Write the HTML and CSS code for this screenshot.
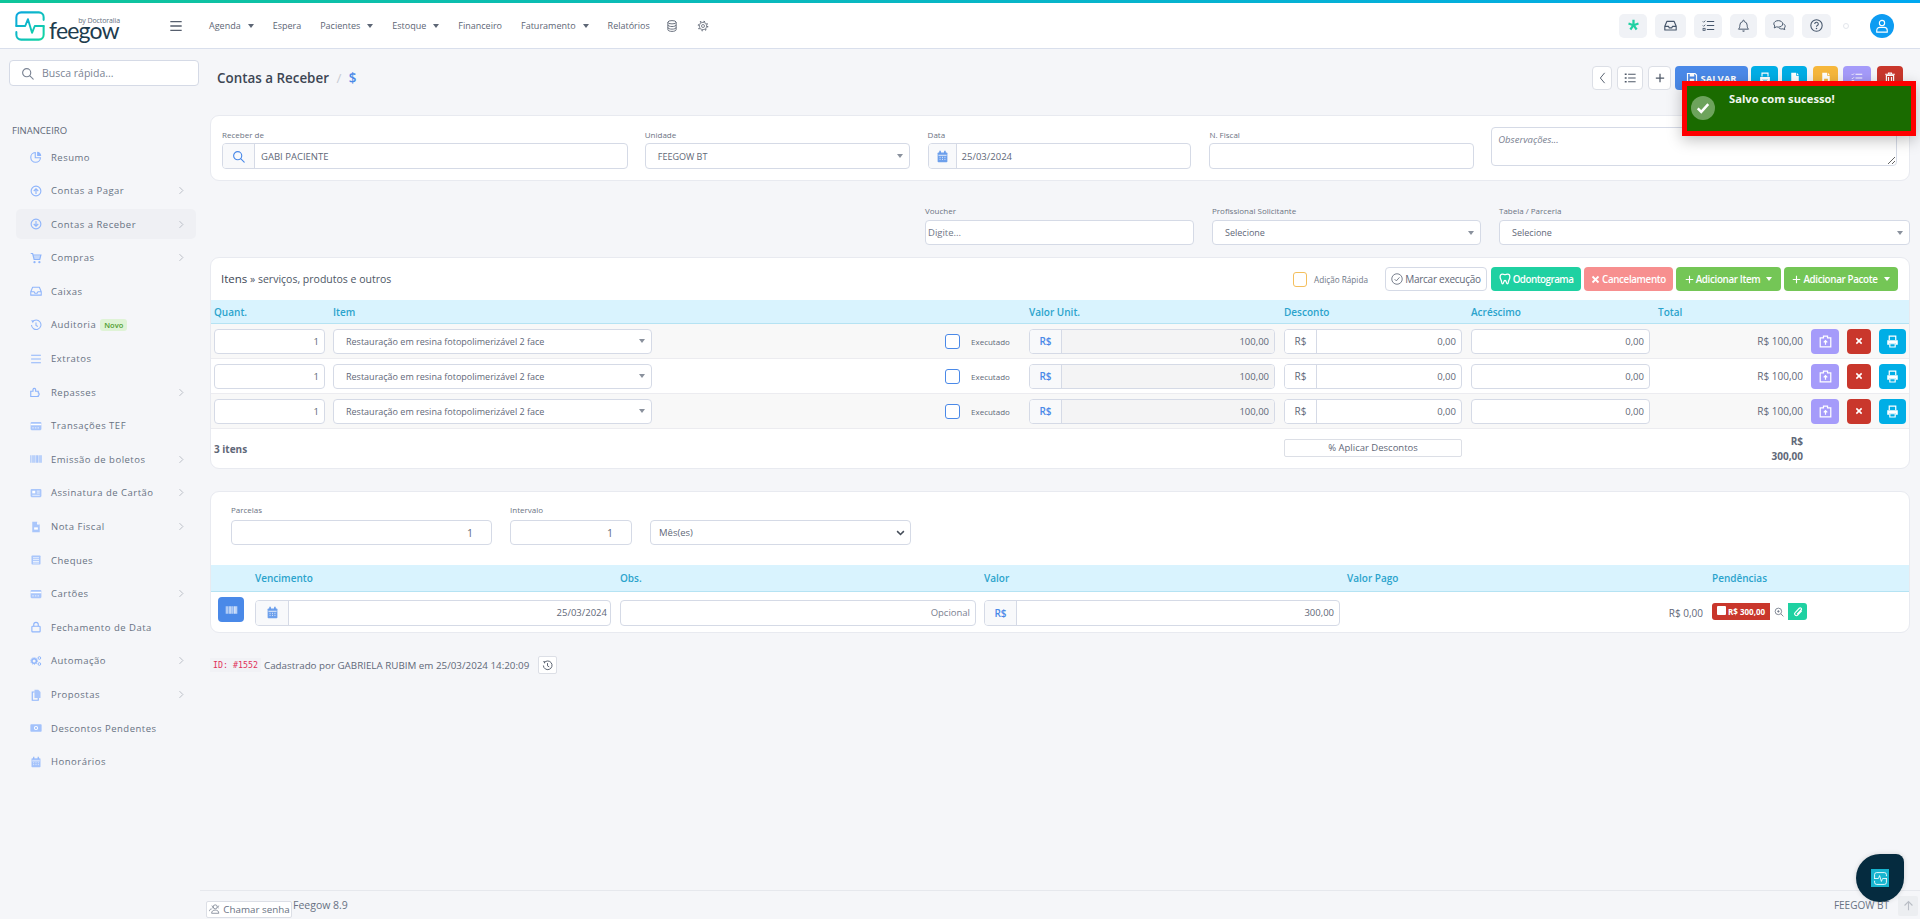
FILE: index.html
```html
<!DOCTYPE html>
<html lang="pt-BR">
<head>
<meta charset="utf-8">
<title>Contas a Receber - Feegow</title>
<link rel="stylesheet" href="styles.css">
</head>
<body>
<svg class="sprite" width="0" height="0" aria-hidden="true">
  <defs>
    <linearGradient id="lg" x1="0" y1="0" x2="1" y2="1"><stop offset="0" stop-color="#0aa6e0"/><stop offset="1" stop-color="#12d6a0"/></linearGradient>
    <symbol id="i-search" viewBox="0 0 16 16"><circle cx="7" cy="7" r="5" fill="none" stroke="currentColor" stroke-width="1.4"/><path d="M11 11l4 4" stroke="currentColor" stroke-width="1.4" stroke-linecap="round"/></symbol>
    <symbol id="i-pie" viewBox="0 0 16 16"><path d="M7 2a6.5 6.5 0 1 0 7 7H7z" fill="none" stroke="currentColor" stroke-width="1.5"/><path d="M9.500 1v5.500H15A6 6 0 0 0 9.500 1z" fill="currentColor"/></symbol>
    <symbol id="i-up" viewBox="0 0 16 16"><circle cx="8" cy="8" r="6.500" fill="none" stroke="currentColor" stroke-width="1.500"/><path d="M8 12V5M5 8l3-3 3 3" fill="none" stroke="currentColor" stroke-width="1.500"/></symbol>
    <symbol id="i-down" viewBox="0 0 16 16"><circle cx="8" cy="8" r="6.500" fill="none" stroke="currentColor" stroke-width="1.500"/><path d="M8 4v7M5 8l3 3 3-3" fill="none" stroke="currentColor" stroke-width="1.500"/></symbol>
    <symbol id="i-cart" viewBox="0 0 16 16"><path d="M1 2h2.500l2 8h7.500l1.500-6H4.200" fill="none" stroke="currentColor" stroke-width="1.600"/><path d="M4.500 4.500h10l-1.200 5H5.700z" fill="currentColor" opacity=".45"/><circle cx="6" cy="13.500" r="1.500" fill="currentColor"/><circle cx="12.500" cy="13.500" r="1.500" fill="currentColor"/></symbol>
    <symbol id="i-inbox" viewBox="0 0 16 16"><path d="M1 9l2.500-6h9L15 9v4.500H1z M1 9h4.500l1 2h3l1-2H15" fill="none" stroke="currentColor" stroke-width="1.400" stroke-linejoin="round"/></symbol>
    <symbol id="i-history" viewBox="0 0 16 16"><path d="M3.200 4A6.300 6.300 0 1 1 2 8" fill="none" stroke="currentColor" stroke-width="1.400"/><path d="M1.500 1.500L5 2 4 5.500z" fill="currentColor"/><path d="M8 4.500V8.500l2.500 1.500" fill="none" stroke="currentColor" stroke-width="1.400"/></symbol>
    <symbol id="i-lines" viewBox="0 0 16 16"><path d="M1.500 3h13M1.500 8h13M1.500 13h13" stroke="currentColor" stroke-width="1.500"/></symbol>
    <symbol id="i-puzzle" viewBox="0 0 16 16"><path d="M1 7h3V4.500a1.800 1.800 0 0 1 3.500 0V7H11v2.200a1.700 1.700 0 0 1 0 3.300V14H1z" fill="none" stroke="currentColor" stroke-width="1.500"/></symbol>
    <symbol id="i-card" viewBox="0 0 16 16"><rect x=".8" y="2.500" width="14.400" height="11" rx="1.500" fill="currentColor" opacity=".75"/><rect x=".8" y="5" width="14.400" height="2" fill="#fff"/><path d="M3 10.500h2M6.500 10.500h2M10 10.500h2" stroke="#fff"/></symbol>
    <symbol id="i-barcode" viewBox="0 0 16 16"><path d="M1 3v10M3 3v10M5 3v10M6.500 3v10M8.500 3v10M10 3v10M12 3v10M13.500 3v10M15 3v10" stroke="currentColor" stroke-width="1"/></symbol>
    <symbol id="i-idcard" viewBox="0 0 16 16"><rect x=".8" y="2.500" width="14.400" height="11" rx="1.500" fill="currentColor" opacity=".75"/><rect x="3" y="5" width="4" height="3.500" fill="#fff"/><path d="M9 5.500h4M9 8h4M3 11h10" stroke="#fff"/></symbol>
    <symbol id="i-file" viewBox="0 0 16 16"><path d="M3 1h6.500L13 4.500V15H3z" fill="currentColor" opacity=".75"/><path d="M9.500 1v3.500H13" fill="#fff"/><path d="M5.500 8.500h5v3h-5z" fill="#fff"/></symbol>
    <symbol id="i-list" viewBox="0 0 16 16"><rect x="2" y="2" width="12" height="12" rx="1" fill="currentColor" opacity=".75"/><path d="M4 5h8M4 7.500h8M4 10h8M4 12h8" stroke="#fff"/></symbol>
    <symbol id="i-lock" viewBox="0 0 16 16"><rect x="2.500" y="7" width="11" height="7.500" rx="1" fill="none" stroke="currentColor" stroke-width="1.500"/><path d="M5 7V4.800a3 3 0 0 1 6 0V7" fill="none" stroke="currentColor" stroke-width="1.500"/></symbol>
    <symbol id="i-cogs" viewBox="0 0 16 16"><circle cx="5.500" cy="8" r="3" fill="none" stroke="currentColor" stroke-width="2"/><circle cx="5.500" cy="8" r="4.600" fill="none" stroke="currentColor" stroke-width="1.100" stroke-dasharray="1.500 1.400"/><circle cx="12.500" cy="4" r="1.800" fill="none" stroke="currentColor" stroke-width="1.300"/><circle cx="12.500" cy="12" r="1.800" fill="none" stroke="currentColor" stroke-width="1.300"/></symbol>
    <symbol id="i-copy" viewBox="0 0 16 16"><path d="M6 1h5l3 3v8H6z" fill="currentColor" opacity=".75"/><path d="M6 4H3v11h8v-3" fill="none" stroke="currentColor" stroke-width="1.500"/></symbol>
    <symbol id="i-money" viewBox="0 0 16 16"><rect x=".5" y="3" width="15" height="10" rx="1" fill="currentColor" opacity=".8"/><circle cx="8" cy="8" r="2.800" fill="#fff"/><circle cx="8" cy="8" r="1.300" fill="currentColor"/></symbol>
    <symbol id="i-cal" viewBox="0 0 16 16"><rect x="2" y="3" width="12" height="12" rx="1" fill="currentColor" opacity=".8"/><path d="M5 1v3M11 1v3" stroke="currentColor" stroke-width="1.600"/><path d="M3 6.500h10" stroke="#fff"/><path d="M4.500 9h1M7.500 9h1M10.500 9h1M4.500 11.500h1M7.500 11.500h1M10.500 11.500h1" stroke="#fff" stroke-width="1.200"/></symbol>
    <symbol id="i-chev" viewBox="0 0 8 12"><path d="M2 1.500L6.500 6 2 10.500" fill="none" stroke="currentColor" stroke-width="1.200"/></symbol>
    <symbol id="i-db" viewBox="0 0 14 16"><ellipse cx="7" cy="3" rx="5.500" ry="2.200" fill="none" stroke="currentColor" stroke-width="1.200"/><path d="M1.500 3v10c0 1.200 2.500 2.200 5.500 2.200s5.500-1 5.500-2.200V3M1.500 6.500c0 1.200 2.500 2.200 5.500 2.200s5.500-1 5.500-2.200M1.500 10c0 1.200 2.500 2.200 5.500 2.200s5.500-1 5.500-2.200" fill="none" stroke="currentColor" stroke-width="1.200"/></symbol>
    <symbol id="i-gear" viewBox="0 0 16 16"><circle cx="8" cy="8" r="2" fill="none" stroke="currentColor" stroke-width="1"/><circle cx="8" cy="8" r="5" fill="none" stroke="currentColor" stroke-width="1"/><circle cx="8" cy="8" r="6.300" fill="none" stroke="currentColor" stroke-width="1.500" stroke-dasharray="1.800 3.150"/></symbol>
    <symbol id="i-star" viewBox="0 0 16 16"><path d="M6.600 1h2.800v4.700l4.300-1.500.9 2.700-4.400 1.400 2.800 3.800-2.300 1.700L8 9.900l-2.700 3.900L3 12.100l2.800-3.800L1.400 6.900l.9-2.700 4.300 1.500z" fill="currentColor"/></symbol>
    <symbol id="i-tasks" viewBox="0 0 16 16"><path d="M6 3h9M6 8h9M6 13h9" stroke="currentColor" stroke-width="1.300"/><path d="M1 3l1 1 2-2M1 8l1 1 2-2" fill="none" stroke="currentColor" stroke-width="1.100"/><rect x="1.300" y="11.500" width="2.500" height="2.500" fill="none" stroke="currentColor"/></symbol>
    <symbol id="i-bell" viewBox="0 0 16 16"><path d="M8 1.500a1 1 0 0 1 1 1v.700a4.500 4.500 0 0 1 3.500 4.400c0 3 .8 3.900 1.700 4.900H1.800c.9-1 1.700-1.900 1.700-4.900A4.500 4.500 0 0 1 7 3.200v-.700a1 1 0 0 1 1-1z" fill="none" stroke="currentColor" stroke-width="1.200" stroke-linejoin="round"/><path d="M6.500 14.200a1.500 1.500 0 0 0 3 0" fill="currentColor"/></symbol>
    <symbol id="i-chat" viewBox="0 0 16 16"><path d="M6.500 2C3.500 2 1 3.800 1 6c0 1 .5 1.900 1.300 2.600L1.500 11l2.800-1.300c.7.200 1.400.3 2.200.3 3 0 5.500-1.800 5.500-4S9.500 2 6.500 2z" fill="none" stroke="currentColor" stroke-width="1.200" stroke-linejoin="round"/><path d="M13 6c1.200.7 2 1.700 2 2.900 0 .9-.4 1.600-1.100 2.200l.6 2-2.300-1c-1.800.5-4-.1-5.200-1.300" fill="none" stroke="currentColor" stroke-width="1.200"/></symbol>
    <symbol id="i-help" viewBox="0 0 16 16"><circle cx="8" cy="8" r="7" fill="none" stroke="currentColor" stroke-width="1.300"/><path d="M5.800 6.200A2.200 2.200 0 1 1 9 8.100c-.7.400-1 .8-1 1.500" fill="none" stroke="currentColor" stroke-width="1.300"/><circle cx="8" cy="11.700" r=".9" fill="currentColor"/></symbol>
    <symbol id="i-user" viewBox="0 0 16 16"><circle cx="8" cy="4.500" r="3" fill="none" stroke="currentColor" stroke-width="1.300"/><path d="M2 15v-2a3.500 3.500 0 0 1 3.500-3.500h5A3.500 3.500 0 0 1 14 13v2z" fill="none" stroke="currentColor" stroke-width="1.300"/></symbol>
    <symbol id="i-bullets" viewBox="0 0 16 16"><path d="M5.500 3h10M5.500 8h10M5.500 13h10" stroke="currentColor" stroke-width="1.400"/><path d="M1 2h2.500v2H1zM1 7h2.500v2H1zM1 12h2.500v2H1z" fill="currentColor"/></symbol>
    <symbol id="i-plus" viewBox="0 0 12 12"><path d="M6 1v10M1 6h10" stroke="currentColor" stroke-width="1.500"/></symbol>
    <symbol id="i-back" viewBox="0 0 8 14"><path d="M6.500 1L1.500 7l5 6" fill="none" stroke="currentColor" stroke-width="1.100"/></symbol>
    <symbol id="i-save" viewBox="0 0 16 16"><path d="M2 2h10l2 2v10H2z" fill="none" stroke="currentColor" stroke-width="1.600"/><path d="M5 2.500h6v3.500H5zM5 9h6v4.500H5z" fill="currentColor"/></symbol>
    <symbol id="i-print" viewBox="0 0 16 16"><path d="M4 6V1.500h8V6" fill="none" stroke="currentColor" stroke-width="1.500"/><path d="M1.500 6.500h13V12H12v-2H4v2H1.500z" fill="currentColor"/><path d="M4.700 10.700h6.600v4H4.700z" fill="none" stroke="currentColor" stroke-width="1.400"/></symbol>
    <symbol id="i-doc" viewBox="0 0 16 16"><path d="M3 1h6.500v4H13v10H3z" fill="currentColor"/><path d="M10.500 1l2.500 3h-2.500z" fill="currentColor"/></symbol>
    <symbol id="i-docx" viewBox="0 0 16 16"><path d="M3 1h6.500v4H13v10H3z" fill="currentColor"/><path d="M10.500 1l2.500 3h-2.500z" fill="currentColor"/><path d="M5.500 9h5v3h-5z" fill="#f6b73c"/></symbol>
    <symbol id="i-trash" viewBox="0 0 16 16"><path d="M1.500 3h13M6 3V1.300h4V3" fill="none" stroke="currentColor" stroke-width="1.500"/><path d="M3.200 4.500v10.700h9.600V4.500zM6 6.500v7M10 6.500v7" fill="none" stroke="currentColor" stroke-width="1.600"/></symbol>
    <symbol id="i-check" viewBox="0 0 16 16"><path d="M2 8.500l4 4 8-9" fill="none" stroke="currentColor" stroke-width="2.800"/></symbol>
    <symbol id="i-checko" viewBox="0 0 16 16"><circle cx="8" cy="8" r="7" fill="none" stroke="currentColor" stroke-width="1.100"/><path d="M4.800 8.200l2.300 2.300 4.200-4.700" fill="none" stroke="currentColor" stroke-width="1.100"/></symbol>
    <symbol id="i-tooth" viewBox="0 0 16 16"><path d="M4.500 1.500c1.300 0 2.300.8 3.500.8s2.200-.8 3.500-.8c2 0 3 1.700 3 3.700 0 2.800-1.500 3.700-1.800 6-.2 1.500-.5 3.300-1.500 3.300-1.600 0-1-4.500-3.200-4.500S6.400 14.500 4.800 14.500c-1 0-1.300-1.800-1.500-3.300-.3-2.300-1.800-3.200-1.800-6 0-2 1-3.700 3-3.700z" fill="none" stroke="currentColor" stroke-width="1.700"/></symbol>
    <symbol id="i-x" viewBox="0 0 12 12"><path d="M2 2l8 8M10 2l-8 8" stroke="currentColor" stroke-width="2.400"/></symbol>
    <symbol id="i-camera" viewBox="0 0 16 16"><path d="M5.500 1.500h5v2h4v11h-13v-11h4z" fill="none" stroke="currentColor" stroke-width="1.500"/><path d="M8 12V7M5.800 9L8 6.800 10.200 9" fill="none" stroke="currentColor" stroke-width="1.500"/></symbol>
    <symbol id="i-zoomp" viewBox="0 0 16 16"><circle cx="7" cy="7" r="5.200" fill="none" stroke="currentColor" stroke-width="1.200"/><path d="M11 11l4 4M5 7h4M7 5v4" stroke="currentColor" stroke-width="1.200"/></symbol>
    <symbol id="i-clip" viewBox="0 0 16 16"><path d="M13.500 6.500l-6 6.500a2.800 2.800 0 0 1-4-4l6.500-7a2 2 0 0 1 3 2.800l-6 6.400" fill="none" stroke="currentColor" stroke-width="1.800" stroke-linecap="round"/></symbol>
    <symbol id="i-people" viewBox="0 0 18 14"><circle cx="10" cy="4" r="2.800" fill="none" stroke="currentColor"/><path d="M5 13c0-3 2-4.500 5-4.500s5 1.500 5 4.500zM5 2.500a2 2 0 0 1 1 3.500M2 10c0-2 1-3 3-3M15.500 2.500a2 2 0 0 0-1 3.500" fill="none" stroke="currentColor"/></symbol>
    <symbol id="i-arrow" viewBox="0 0 14 14"><path d="M7 13V2M2 7l5-5 5 5" fill="none" stroke="currentColor" stroke-width="1.400"/></symbol>
    <symbol id="i-chevdown" viewBox="0 0 12 8"><path d="M1.500 1.500L6 6l4.500-4.500" fill="none" stroke="currentColor" stroke-width="2"/></symbol>
    <symbol id="i-logo" viewBox="0 0 44 44"><path d="M2 22V9a7 7 0 0 1 7-7h26a7 7 0 0 1 7 7v4M42 22v13a7 7 0 0 1-7 7H9a7 7 0 0 1-7-7v-4" fill="none" stroke="url(#lg)" stroke-width="3" stroke-linecap="round"/><path d="M2 22h13l4-10 6 20 4-10h13" fill="none" stroke="url(#lg)" stroke-width="2.800" stroke-linejoin="round" stroke-linecap="round"/></symbol>
  </defs>
</svg>

<div class="stripe"></div>
<header class="topbar">
  <a class="brand">
    <svg class="brand-mark"><use href="#i-logo"/></svg>
    <span class="brand-text"><small>by Doctoralia</small><b>feegow</b></span>
  </a>
  <svg class="burger"><use href="#i-lines"/></svg>
  <nav class="mainnav">
    <a>Agenda <i class="caret"></i></a>
    <a>Espera</a>
    <a>Pacientes <i class="caret"></i></a>
    <a>Estoque <i class="caret"></i></a>
    <a>Financeiro</a>
    <a>Faturamento <i class="caret"></i></a>
    <a>Relatórios</a>
    <a class="nav-db"><svg class="nav-ico"><use href="#i-db"/></svg></a>
    <a><svg class="nav-ico"><use href="#i-gear"/></svg></a>
  </nav>
  <div class="tools">
    <a class="tool tool-star"><svg><use href="#i-star"/></svg></a>
    <a class="tool tool-w31"><svg><use href="#i-inbox"/></svg></a>
    <a class="tool"><svg><use href="#i-tasks"/></svg></a>
    <a class="tool tool-w27"><svg><use href="#i-bell"/></svg></a>
    <a class="tool tool-w29"><svg><use href="#i-chat"/></svg></a>
    <a class="tool tool-w29"><svg><use href="#i-help"/></svg></a>
    <span class="status-dot"></span>
    <a class="avatar"><svg><use href="#i-user"/></svg></a>
  </div>
</header>

<div class="shell">
  <aside class="sidebar">
    <div class="quick"><svg><use href="#i-search"/></svg><span>Busca rápida...</span></div>
    <div class="side-title">FINANCEIRO</div>
    <ul class="side-menu">
      <li><svg class="si"><use href="#i-pie"/></svg><span>Resumo</span></li>
      <li><svg class="si"><use href="#i-up"/></svg><span>Contas a Pagar</span><svg class="sc"><use href="#i-chev"/></svg></li>
      <li class="active"><svg class="si"><use href="#i-down"/></svg><span>Contas a Receber</span><svg class="sc"><use href="#i-chev"/></svg></li>
      <li><svg class="si"><use href="#i-cart"/></svg><span>Compras</span><svg class="sc"><use href="#i-chev"/></svg></li>
      <li><svg class="si"><use href="#i-inbox"/></svg><span>Caixas</span></li>
      <li><svg class="si"><use href="#i-history"/></svg><span>Auditoria</span><em class="novo">Novo</em></li>
      <li><svg class="si"><use href="#i-lines"/></svg><span>Extratos</span></li>
      <li><svg class="si"><use href="#i-puzzle"/></svg><span>Repasses</span><svg class="sc"><use href="#i-chev"/></svg></li>
      <li><svg class="si"><use href="#i-card"/></svg><span>Transações TEF</span></li>
      <li><svg class="si"><use href="#i-barcode"/></svg><span>Emissão de boletos</span><svg class="sc"><use href="#i-chev"/></svg></li>
      <li><svg class="si"><use href="#i-idcard"/></svg><span>Assinatura de Cartão</span><svg class="sc"><use href="#i-chev"/></svg></li>
      <li><svg class="si"><use href="#i-file"/></svg><span>Nota Fiscal</span><svg class="sc"><use href="#i-chev"/></svg></li>
      <li><svg class="si"><use href="#i-list"/></svg><span>Cheques</span></li>
      <li><svg class="si"><use href="#i-card"/></svg><span>Cartões</span><svg class="sc"><use href="#i-chev"/></svg></li>
      <li><svg class="si"><use href="#i-lock"/></svg><span>Fechamento de Data</span></li>
      <li><svg class="si"><use href="#i-cogs"/></svg><span>Automação</span><svg class="sc"><use href="#i-chev"/></svg></li>
      <li><svg class="si"><use href="#i-copy"/></svg><span>Propostas</span><svg class="sc"><use href="#i-chev"/></svg></li>
      <li><svg class="si"><use href="#i-money"/></svg><span>Descontos Pendentes</span></li>
      <li><svg class="si"><use href="#i-cal"/></svg><span>Honorários</span></li>
    </ul>
  </aside>

  <main class="main">
    <div class="content">
      <div class="pagehead">
        <h1>Contas a Receber <span class="crumb-sep">/</span> <span class="crumb-ico">$</span></h1>
        <div class="actions">
          <a class="act act-w act-back"><svg><use href="#i-back"/></svg></a>
          <a class="act act-w act-list"><svg><use href="#i-bullets"/></svg></a>
          <a class="act act-w act-plus"><svg><use href="#i-plus"/></svg></a>
          <a class="act act-save"><svg><use href="#i-save"/></svg>SALVAR</a>
          <a class="act act-blue act-27"><svg><use href="#i-print"/></svg></a>
          <a class="act act-blue act-25"><svg><use href="#i-doc"/></svg></a>
          <a class="act act-orange act-25"><svg><use href="#i-docx"/></svg></a>
          <a class="act act-purple act-28"><svg><use href="#i-tasks"/></svg></a>
          <a class="act act-red act-26"><svg><use href="#i-trash"/></svg></a>
        </div>
      </div>

      <section class="card card-top">
        <div class="fld f-receber"><label>Receber de</label>
          <div class="ctl group"><span class="addon addon-ico"><svg class="ico-blue"><use href="#i-search"/></svg></span><span class="val">GABI PACIENTE</span></div></div>
        <div class="fld f-unidade"><label>Unidade</label>
          <div class="ctl sel"><span class="val">FEEGOW BT</span><i class="caret"></i></div></div>
        <div class="fld f-data"><label>Data</label>
          <div class="ctl group"><span class="addon addon-ico addon-cal"><svg class="ico-blue"><use href="#i-cal"/></svg></span><span class="val">25/03/2024</span></div></div>
        <div class="fld f-nf"><label>N. Fiscal</label><div class="ctl"></div></div>
        <textarea class="obs" placeholder="Observações..."></textarea>
      </section>

      <section class="extra">
        <div class="fld f-voucher"><label>Voucher</label><div class="ctl"><span class="val val-ph">Digite...</span></div></div>
        <div class="fld f-prof"><label>Profissional Solicitante</label><div class="ctl sel"><span class="val">Selecione</span><i class="caret"></i></div></div>
        <div class="fld f-tabela"><label>Tabela / Parceria</label><div class="ctl sel"><span class="val">Selecione</span><i class="caret"></i></div></div>
      </section>

      <section class="card card-items">
        <div class="items-head">
          <h2><b>Itens</b> » serviços, produtos e outros</h2>
          <div class="items-tools">
            <span class="quick-add"><i class="cb-orange"></i>Adição Rápida</span>
            <a class="btn btn-white b-marcar"><svg><use href="#i-checko"/></svg>Marcar execução</a>
            <a class="btn btn-teal b-odonto"><svg><use href="#i-tooth"/></svg>Odontograma</a>
            <a class="btn btn-salmon b-cancel"><svg class="sm"><use href="#i-x"/></svg>Cancelamento</a>
            <a class="btn btn-green b-item"><svg class="sm"><use href="#i-plus"/></svg>Adicionar Item<i class="caret caret-w"></i></a>
            <a class="btn btn-green b-pacote"><svg class="sm"><use href="#i-plus"/></svg>Adicionar Pacote<i class="caret caret-w"></i></a>
          </div>
        </div>
        <div class="band item-grid">
          <span class="c-qt">Quant.</span><span class="c-it">Item</span><span class="c-vu">Valor Unit.</span><span class="c-de">Desconto</span><span class="c-ac">Acréscimo</span><span class="c-to">Total</span>
        </div>

        <div class="irow item-grid odd">
          <div class="ctl num c-qt">1</div>
          <div class="ctl sel c-it"><span class="val">Restauração em resina fotopolimerizável 2 face</span><i class="caret"></i></div>
          <div class="c-ex"><i class="cb-blue"></i><span>Executado</span></div>
          <div class="ctl group c-vu"><span class="addon addon-rs addon-blue">R$</span><span class="val num val-ro">100,00</span></div>
          <div class="ctl group c-de"><span class="addon addon-rs addon-w">R$</span><span class="val num">0,00</span></div>
          <div class="ctl num c-ac">0,00</div>
          <div class="c-to num-t">R$ 100,00</div>
          <div class="c-bt"><a class="rb rb-purple"><svg><use href="#i-camera"/></svg></a><a class="rb rb-red"><svg class="xs"><use href="#i-x"/></svg></a><a class="rb rb-blue"><svg><use href="#i-print"/></svg></a></div>
        </div>
        <div class="irow item-grid">
          <div class="ctl num c-qt">1</div>
          <div class="ctl sel c-it"><span class="val">Restauração em resina fotopolimerizável 2 face</span><i class="caret"></i></div>
          <div class="c-ex"><i class="cb-blue"></i><span>Executado</span></div>
          <div class="ctl group c-vu"><span class="addon addon-rs addon-blue">R$</span><span class="val num val-ro">100,00</span></div>
          <div class="ctl group c-de"><span class="addon addon-rs addon-w">R$</span><span class="val num">0,00</span></div>
          <div class="ctl num c-ac">0,00</div>
          <div class="c-to num-t">R$ 100,00</div>
          <div class="c-bt"><a class="rb rb-purple"><svg><use href="#i-camera"/></svg></a><a class="rb rb-red"><svg class="xs"><use href="#i-x"/></svg></a><a class="rb rb-blue"><svg><use href="#i-print"/></svg></a></div>
        </div>
        <div class="irow item-grid odd">
          <div class="ctl num c-qt">1</div>
          <div class="ctl sel c-it"><span class="val">Restauração em resina fotopolimerizável 2 face</span><i class="caret"></i></div>
          <div class="c-ex"><i class="cb-blue"></i><span>Executado</span></div>
          <div class="ctl group c-vu"><span class="addon addon-rs addon-blue">R$</span><span class="val num val-ro">100,00</span></div>
          <div class="ctl group c-de"><span class="addon addon-rs addon-w">R$</span><span class="val num">0,00</span></div>
          <div class="ctl num c-ac">0,00</div>
          <div class="c-to num-t">R$ 100,00</div>
          <div class="c-bt"><a class="rb rb-purple"><svg><use href="#i-camera"/></svg></a><a class="rb rb-red"><svg class="xs"><use href="#i-x"/></svg></a><a class="rb rb-blue"><svg><use href="#i-print"/></svg></a></div>
        </div>

        <div class="ifoot item-grid">
          <b class="c-qt foot-count">3 itens</b>
          <a class="apply c-de">% Aplicar Descontos</a>
          <b class="c-to foot-total">R$<br>300,00</b>
        </div>
      </section>

      <section class="card card-pay">
        <div class="pay-form">
          <div class="fld f-parc"><label>Parcelas</label><div class="ctl num">1</div></div>
          <div class="fld f-int"><label>Intervalo</label><div class="ctl num">1</div></div>
          <div class="ctl sel f-per"><span class="val">Mês(es)</span><svg class="chevd"><use href="#i-chevdown"/></svg></div>
        </div>
        <div class="band pay-grid band-pay">
          <span class="p-ve">Vencimento</span><span class="p-ob">Obs.</span><span class="p-va">Valor</span><span class="p-pg">Valor Pago</span><span class="p-pe">Pendências</span>
        </div>
        <div class="prow pay-grid">
          <a class="rb-pay p-bt"><svg><use href="#i-barcode"/></svg></a>
          <div class="ctl group p-ve"><span class="addon addon-ico addon-cal2"><svg class="ico-blue"><use href="#i-cal"/></svg></span><span class="val num">25/03/2024</span></div>
          <div class="ctl num p-ob ph-op">Opcional</div>
          <div class="ctl group p-va"><span class="addon addon-rs addon-blue">R$</span><span class="val num">300,00</span></div>
          <div class="p-sum">R$ 0,00</div>
          <div class="p-pe pend"><span class="pend-red"><i class="pend-cb"></i>R$ 300,00</span><span class="pend-zoom"><svg><use href="#i-zoomp"/></svg></span><span class="pend-clip"><svg><use href="#i-clip"/></svg></span></div>
        </div>
      </section>

      <div class="meta"><code>ID: #1552</code><span>Cadastrado por GABRIELA RUBIM em 25/03/2024 14:20:09</span><a class="hist"><svg><use href="#i-history"/></svg></a></div>
    </div>

    <footer class="foot">
      <a class="call"><svg><use href="#i-people"/></svg>Chamar senha</a>
      <span>Feegow 8.9</span>
      <span class="foot-unit">FEEGOW BT</span>
      <a class="totop"><svg><use href="#i-arrow"/></svg></a>
    </footer>
  </main>
</div>

<div class="toast"><span class="toast-ico"><svg><use href="#i-check"/></svg></span><strong>Salvo com sucesso!</strong></div>
<a class="bubble"><span><svg><use href="#i-logo"/></svg></span></a>
</body>
</html>
```

FILE: styles.css
```css
* { box-sizing: border-box; }
html, body { margin: 0; height: 919px; overflow: hidden; }
body { display: flex; flex-direction: column; background: #f5f6f9; color: #5f6878; font-family: "Open Sans", "Noto Sans", sans-serif; font-size: 11px; }
a { color: inherit; text-decoration: none; }
ul { list-style: none; margin: 0; padding: 0; }
.sprite { position: absolute; }

.stripe { height: 3px; flex: none; background: linear-gradient(90deg, #0fc59a 0%, #00a8f0 100%); }
.topbar { height: 46px; flex: none; display: flex; align-items: center; background: #fff; border-bottom: 1px solid #d9dfec; padding-left: 15px; }
.brand { display: flex; align-items: center; width: 154px; gap: 4px; }
.brand-mark { width: 30px; height: 30px; }
.brand-text { display: flex; flex-direction: column; align-items: flex-end; width: 71px; color: #1d3c4e; margin-top: 1px; }
.brand-text small { font-size: 7px; line-height: 7px; letter-spacing: -.1px; color: #66717f; }
.brand-text b { font-family: "Lato", sans-serif; font-weight: 400; font-size: 23px; line-height: 12px; letter-spacing: -.8px; align-self: flex-start; }
.burger { width: 14px; height: 14px; color: #565f6e; }
.mainnav { display: flex; align-items: center; margin-left: 26px; gap: 19px; font-size: 9px; color: #5d6675; }
.mainnav a { display: flex; align-items: center; gap: 7px; }
.mainnav .nav-db { margin-left: -3px; }
.nav-ico { width: 12px; height: 12px; color: #5a6270; }
.caret { display: inline-block; width: 0; height: 0; border: 3.5px solid transparent; border-top: 4px solid #5d6675; border-bottom: 0; }
.tools { margin-left: auto; display: flex; align-items: center; gap: 8px; padding-right: 26px; }
.tool { width: 28px; height: 24px; background: #f0f2f6; border-radius: 5px; display: flex; align-items: center; justify-content: center; color: #46566b; }
.tool svg { width: 13px; height: 13px; }
.tool-star { color: #1fd1a2; }
.tool-w31 { width: 31px; }
.tool-w29 { width: 29px; }
.tool-w27 { width: 27px; }
.status-dot { width: 6px; height: 6px; border-radius: 50%; border: 1px solid #e3e6ec; margin: 0 13px 0 4px; }
.avatar { width: 24px; height: 24px; border-radius: 50%; background: #0d9cf2; display: flex; align-items: center; justify-content: center; color: #fff; }
.avatar svg { width: 14px; height: 14px; }

.shell { flex: 1; display: flex; min-height: 0; }
.sidebar { width: 200px; flex: none; padding: 11px 4px 0 9px; }
.quick { width: 190px; height: 26px; background: #fff; border: 1px solid #d5dae6; border-radius: 4px; display: flex; align-items: center; padding-left: 11px; gap: 8px; color: #7b8494; font-size: 10.5px; }
.quick svg { width: 13px; height: 13px; }
.side-title { margin: 38px 0 0 3px; font-size: 9.5px; line-height: 14px; color: #5f6878; }
.side-menu { margin: 4px 0 0 7px; }
.side-menu li { height: 30px; margin-bottom: 3.6px; display: flex; align-items: center; border-radius: 5px; padding-left: 14px; font-size: 9.5px; letter-spacing: .5px; color: #687283; }
.side-menu li.active { background: #eff0f4; }
.si { width: 12px; height: 12px; color: #8fb5fb; margin-right: 9px; flex: none; }
.sc { width: 6px; height: 9px; color: #b4b9c2; margin-left: auto; margin-right: 12px; }
.novo { margin-left: 4px; padding: 0 4px; height: 12px; line-height: 12px; background: #dff3d6; color: #4f9c2f; border-radius: 3px; font-style: normal; font-size: 7.5px; font-weight: 600; letter-spacing: 0; }

.main { flex: 1; display: flex; flex-direction: column; min-width: 0; }
.content { flex: 1; padding: 0 10px; }
.pagehead { height: 66px; display: flex; align-items: flex-start; justify-content: space-between; padding-top: 17px; }
.pagehead h1 { margin: 0 0 0 7px; font-size: 13.4px; font-weight: 600; line-height: 25px; color: #3d4654; }
.crumb-sep { color: #c8ccd4; font-weight: 400; margin: 0 4px; }
.crumb-ico { color: #4a89e8; }
.actions { display: flex; align-items: center; gap: 4px; padding-right: 7px; }
.act { height: 24px; border-radius: 4px; display: flex; align-items: center; justify-content: center; color: #fff; }
.act svg { width: 12px; height: 12px; }
.act-w { background: #fff; border: 1px solid #dcdfe6; color: #4f5968; }
.act-back { width: 20px; margin-right: 1px; }
.act-back svg { width: 7px; }
.act-list { width: 26px; margin-right: 1px; }
.act-plus { width: 23px; }
.act-plus svg { width: 10px; height: 10px; }
.act-save { width: 73px; margin-right: -1px; background: #4a89e8; gap: 2px; font-size: 9.5px; font-weight: 700; }
.act-27 { width: 27px; }
.act-25 { width: 25px; }
.act-28 { width: 28px; }
.act-26 { width: 26px; }
.act-blue { background: #00aee6; }
.act-orange { background: #f6b73c; margin-left: 2px; }
.act-purple { background: #a59bfa; margin-left: 1px; }
.act-red { background: #c9372c; margin-left: 2px; }

.card { background: #fff; border: 1px solid #e8eaf0; border-radius: 9px; }
.fld label { display: block; font-size: 8px; line-height: 11px; color: #6b7382; margin-bottom: 3px; }
.ctl { height: 26px; background: #fff; border: 1px solid #d5dae6; border-radius: 4px; display: flex; align-items: center; font-size: 9.5px; color: #5f6878; }
.val { padding-left: 12px; white-space: nowrap; }
.val-ph { padding-left: 2px; color: #6f7787; }
.sel .val { font-size: 9px; }
.group { overflow: hidden; }
.group .val { flex: 1; align-self: stretch; display: flex; align-items: center; padding-left: 6px; }
.addon { height: 100%; flex: none; display: flex; align-items: center; justify-content: center; border-right: 1px solid #d5dae6; background: #f8f9fb; }
.addon-ico { width: 32px; }
.addon-ico svg { width: 13px; height: 13px; }
.ico-blue { color: #4a89e8; }
.addon-cal { width: 28px; }
.addon-cal + .val { padding-left: 5px; }
.addon-cal2 { width: 33px; }
.sel { justify-content: space-between; padding-right: 6px; }
.sel .caret { border-top-color: #8a919d; border-width: 3px; border-top-width: 4px; border-bottom: 0; }
.num { justify-content: flex-end; padding-right: 5px; }
.group .val.num { justify-content: flex-end; padding: 0 5px 0 0; }
.group .addon-cal2 + .val.num { padding-right: 3px; }

.card-top { height: 66px; position: relative; display: flex; padding: 13px 12px 0 11px; }
.f-receber { width: 406px; margin-right: 17px; }
.f-unidade { width: 265px; margin-right: 18px; }
.f-data { width: 264px; margin-right: 18px; }
.f-nf { width: 265px; margin-right: 17px; }
.obs { width: 406px; height: 39px; margin-top: -2px; border: 1px solid #d5dae6; border-radius: 4px; padding: 5px 6px; font: italic 9.5px "Open Sans", sans-serif; color: #5f6878; outline: 0; display: block; }
.obs::placeholder { color: #7a8190; }

.extra { height: 76px; display: flex; padding: 24px 0 0 715px; }
.f-voucher { width: 269px; margin-right: 18px; }
.f-prof { width: 269px; margin-right: 18px; }
.f-tabela { width: 411px; }
.extra label { margin-bottom: 4px; }
.extra .ctl { height: 25px; }

.card-items { height: 212px; overflow: hidden; }
.items-head { height: 42px; display: flex; align-items: center; justify-content: space-between; padding: 0 11px 0 10px; }
.items-head h2 { margin: -2px 0 0; font-size: 10.5px; font-weight: 400; color: #4d5665; }
.items-head h2 b { font-weight: 400; font-size: 11.5px; color: #3d4654; }
.items-tools { display: flex; align-items: center; gap: 3px; }
.quick-add { display: flex; align-items: center; font-size: 8.2px; color: #6f7787; margin-right: 14px; gap: 7px; }
.cb-orange { width: 14px; height: 15px; border: 1px solid #f4bf5d; border-radius: 3px; background: #fff; }
.btn { height: 24px; border-radius: 4px; display: flex; align-items: center; justify-content: center; gap: 2px; font-size: 9.8px; font-weight: 600; color: #fff; white-space: nowrap; letter-spacing: -.35px; }
.btn svg { width: 12px; height: 12px; flex: none; }
.btn svg.sm { width: 9px; height: 9px; }
.btn-white { background: #fff; border: 1px solid #d5dae6; color: #5f6878; font-weight: 400; }
.btn-teal { background: #1fd1a2; }
.btn-salmon { background: #f78f8f; }
.btn-green { background: #74c656; }
.b-marcar { width: 102px; margin-right: 1px; font-size: 10px; letter-spacing: -.25px; }
.b-odonto { width: 90px; letter-spacing: -.5px; }
.b-cancel { width: 89px; }
.b-item { width: 105px; }
.b-pacote { width: 114px; }
.caret-w { border-top-color: #fff; margin-left: 4px; }

.band { background: #d9f3fe; border-bottom: 1px solid #b5e3f3; color: #2ba3cc; font-size: 10px; font-weight: 600; }
.item-grid { display: grid; grid-template-columns: 111px 8px 319px 377px 246px 9px 178px 9px 179px 8px 145px 107px; align-items: center; padding-left: 3px; }
.band.item-grid { height: 24px; }
.c-qt { grid-column: 1; }
.c-it { grid-column: 3; }
.c-ex { grid-column: 4; display: flex; align-items: center; padding-left: 293px; }
.c-vu { grid-column: 5; }
.c-de { grid-column: 7; }
.c-ac { grid-column: 9; }
.c-to { grid-column: 11; }
.c-bt { grid-column: 12; }
.c-ex span { font-size: 8px; margin-left: 11px; color: #5f6878; white-space: nowrap; }
.cb-blue { width: 15px; height: 15px; border: 1.5px solid #4a89e8; border-radius: 3px; background: #fff; flex: none; }
.irow { height: 35px; border-bottom: 1px solid #ececf0; }
.irow.odd { background: #f8f8f8; }
.irow .ctl { height: 25px; }
.addon-rs { width: 32px; color: #5f6878; background: #fff; font-size: 10px; }
.addon-blue { color: #4a89e8; font-weight: 600; background: #f8f9fb; }
.val-ro { background: #f4f4f5; }
.num-t { text-align: right; font-size: 10px; }
.c-bt { display: flex; gap: 8px; padding-left: 8px; align-items: center; }
.rb { height: 25px; border-radius: 4px; display: flex; align-items: center; justify-content: center; color: #fff; }
.rb svg { width: 13px; height: 13px; }
.rb svg.xs { width: 8px; height: 8px; }
.rb-purple { width: 28px; background: #a59bfa; }
.rb-red { width: 24px; background: #c9372c; }
.rb-blue { width: 27px; background: #00aee6; }
.ifoot { height: 39px; }
.foot-count { font-size: 10px; font-weight: 700; }
.apply { height: 18px; border: 1px solid #dcdfe6; border-radius: 2px; display: flex; align-items: center; justify-content: center; font-size: 9.5px; background: #fff; margin-top: -2px; }
.foot-total { grid-column: 11; text-align: right; font-size: 10px; line-height: 15px; font-weight: 700; }

.card-pay { height: 142px; margin-top: 22px; overflow: hidden; }
.pay-form { height: 73px; display: flex; padding: 12px 0 0 20px; align-items: flex-start; }
.pay-form label { margin-bottom: 5px; }
.pay-form .ctl { height: 25px; font-size: 10.5px; }
.pay-form .num { padding-right: 18px; }
.f-parc { width: 261px; margin-right: 18px; }
.f-int { width: 122px; margin-right: 18px; }
.f-per { width: 261px; margin-top: 16px; padding-right: 5px; }
.f-per .val { padding-left: 8px; font-size: 9.5px; }
.chevd { width: 9px; height: 6px; color: #444c58; }
.pay-grid { display: grid; grid-template-columns: 44px 356px 9px 356px 8px 356px 7px 365px 1fr; align-items: center; }
.band-pay { height: 27px; }
.p-bt { grid-column: 1; }
.p-ve { grid-column: 2; }
.p-ob { grid-column: 4; }
.p-va { grid-column: 6; }
.p-pg { grid-column: 8; }
.p-sum { grid-column: 8; text-align: right; font-size: 10px; padding-right: 9px; }
.p-pe { grid-column: 9; }
.prow { height: 41px; }
.prow .ctl { height: 26px; }
.rb-pay { width: 26px; height: 25px; margin: -6px 0 0 7px; background: #4a89e8; border-radius: 4px; display: flex; align-items: center; justify-content: center; color: #fff; }
.rb-pay svg { width: 13px; height: 12px; }
.ph-op { color: #7a8190; }
.pend { display: flex; height: 17px; align-items: stretch; font-size: 8px; font-weight: 700; color: #fff; margin-top: -2px; }
.pend-red { width: 58px; background: #c9372c; border-radius: 3px 0 0 3px; display: flex; align-items: center; padding-left: 5px; gap: 2px; white-space: nowrap; }
.pend-cb { width: 9px; height: 9px; background: #fff; border-radius: 1px; flex: none; margin-top: -3px; }
.pend-zoom { width: 18px; background: #fff; color: #5f6878; display: flex; align-items: center; justify-content: center; }
.pend-zoom svg { width: 10px; height: 10px; }
.pend-clip { width: 19px; background: #1fd1a2; border-radius: 0 3px 3px 0; display: flex; align-items: center; justify-content: center; }
.pend-clip svg { width: 10px; height: 10px; }

.meta { display: flex; align-items: center; margin-top: 23px; font-size: 9.8px; height: 18px; }
.meta code { font-family: "DejaVu Sans Mono", "Liberation Mono", monospace; font-size: 8.3px; color: #e0315a; background: #f1f2f6; padding: 2px 3px; margin-right: 3px; }
.hist { width: 19px; height: 18px; margin-left: 9px; background: #fff; border: 1px solid #dcdfe6; border-radius: 2px; display: flex; align-items: center; justify-content: center; color: #555e6c; }
.hist svg { width: 11px; height: 11px; }

.foot { height: 29px; flex: none; display: flex; align-items: center; padding: 0 2px 0 6px; border-top: 1px solid #e6e8ed; font-size: 10.5px; color: #687283; }
.foot > span { margin-top: -1px; }
.call { width: 86px; height: 17px; margin: 8px 1px 0 0; background: #fff; border: 1px solid #dcdfe6; border-radius: 2px; display: flex; align-items: center; justify-content: center; gap: 2px; font-size: 9.8px; white-space: nowrap; }
.call svg { width: 13px; height: 10px; flex: none; }
.foot > .foot-unit { margin-left: auto; margin-right: 9px; font-size: 10px; }
.totop { width: 20px; height: 20px; margin-top: 1px; background: #eceef1; border-radius: 2px; display: flex; align-items: center; justify-content: center; color: #b9bdc5; }
.totop svg { width: 11px; height: 11px; }

.toast { position: absolute; left: 1682px; top: 81px; width: 234px; height: 55px; background: #1a6b00; border: 5px solid #ff0000; box-shadow: 0 4px 14px rgba(0,0,0,.25); color: #f2f6ef; }
.toast strong { position: absolute; left: 42px; top: 5px; font-size: 11.2px; font-weight: 700; }
.toast-ico { position: absolute; left: 4px; top: 10px; width: 24px; height: 24px; border-radius: 50%; background: #6da35c; display: flex; align-items: center; justify-content: center; color: #fff; }
.toast-ico svg { width: 14px; height: 14px; }
.bubble { position: absolute; left: 1856px; top: 854px; width: 48px; height: 48px; background: #052b3f; border-radius: 50% 8px 50% 50%; display: flex; align-items: center; justify-content: center; box-shadow: 0 0 5px rgba(0,0,0,.15); }
.bubble span { width: 18px; height: 18px; background: #17b4cf; display: flex; align-items: center; justify-content: center; }
.bubble svg { width: 13px; height: 13px; filter: brightness(0) invert(1); }
```
